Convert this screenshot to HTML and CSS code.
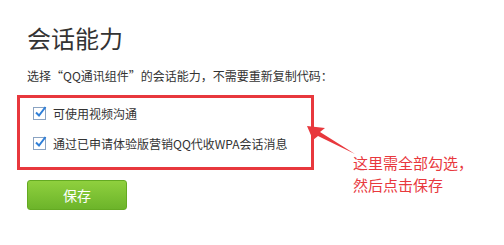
FILE: index.html
```html
<!DOCTYPE html>
<html lang="zh-CN">
<head>
    <meta charset="UTF-8">
    <title>会话能力</title>
    <link rel="stylesheet" href="styles.css">
</head>
<body>
<div class="page">
    <h1 class="title">会话能力</h1>
    <p class="desc">选择“QQ通讯组件”的会话能力，不需要重新复制代码：</p>
    <!--勾选项-->
    <div class="options">
        <label class="opt">
            <span class="chk">
                <svg width="15" height="15" viewBox="0 0 15 15"><path d="M3 7.5 L6 10.5 L12.5 2" fill="none" stroke="#2f7fd8" stroke-width="2"/></svg>
            </span>
            可使用视频沟通
        </label>
        <label class="opt">
            <span class="chk">
                <svg width="15" height="15" viewBox="0 0 15 15"><path d="M3 7.5 L6 10.5 L12.5 2" fill="none" stroke="#2f7fd8" stroke-width="2"/></svg>
            </span>
            通过已申请体验版营销QQ代收WPA会话消息
        </label>
    </div>
    <a class="btn" href="javascript:;">保存</a>

    <!--标注-->
    <svg class="arrow" width="60" height="40" viewBox="0 0 60 40">
        <polygon points="2,3 20,5 15,9 50,31 13,13 8,17" fill="#e8383d"/>
    </svg>
    <div class="note">这里需全部勾选，<br>然后点击保存</div>
</div>
</body>
</html>
```

FILE: styles.css
```css
*{
    margin: 0;
    padding: 0;
}
body{
    background: #fff;
    font-family: "Noto Sans CJK SC", "Noto Sans", sans-serif;
    color: #333;
}
.page{
    position: relative;
    width: 504px;
    height: 245px;
    padding-left: 27px;
    box-sizing: border-box;
}
.title{
    padding-top: 26px;
    font-size: 24px;
    line-height: 24px;
    font-weight: normal;
    color: #333;
}
.desc{
    margin-top: 20px;
    font-size: 12px;
    line-height: 12px;
}
.options{
    margin: 13px 0 0 -10px;
    width: 281px;
    border: 3px solid #e8383d;
    padding: 9px 0 17px 10px;
    display: flex;
    flex-direction: column;
    gap: 17px;
}
.opt{
    display: flex;
    align-items: center;
    height: 13px;
    font-size: 12px;
    line-height: 13px;
}
.chk{
    position: relative;
    width: 11px;
    height: 11px;
    border: 1px solid #8aa3c2;
    background: #fff;
    margin: 0 7px 0 3px;
}
.chk svg{
    position: absolute;
    left: -1px;
    top: -3px;
}
.btn{
    display: block;
    margin-top: 10px;
    width: 98px;
    height: 28px;
    border: 1px solid #64aa22;
    border-radius: 3px;
    background: linear-gradient(#8fd03e, #6cb42a);
    color: #fff;
    font-size: 14px;
    line-height: 28px;
    text-align: center;
    text-decoration: none;
}
.arrow{
    position: absolute;
    left: 305px;
    top: 123px;
}
.note{
    position: absolute;
    left: 353px;
    top: 152px;
    font-size: 15px;
    line-height: 22px;
    color: #e8383d;
}
```
